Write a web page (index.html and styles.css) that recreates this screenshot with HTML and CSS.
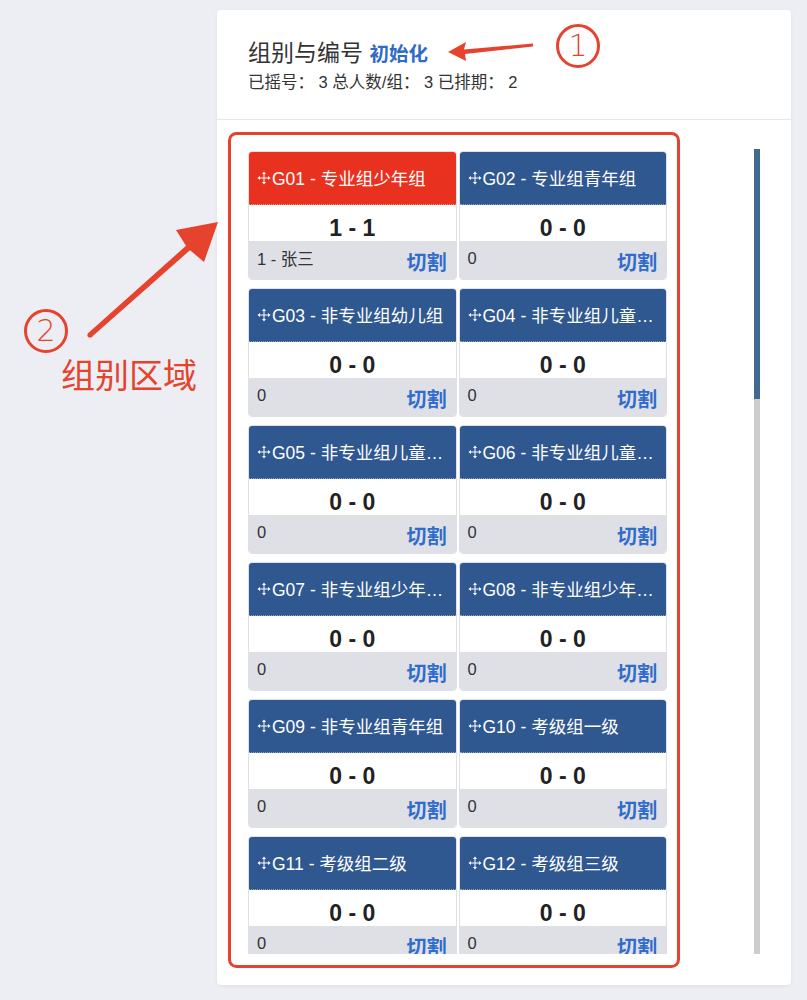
FILE: index.html
```html
<!DOCTYPE html>
<html lang="zh">
<head>
  <meta charset="UTF-8">
  <title>组别与编号</title>
  <link rel="stylesheet" href="styles.css">
</head>
<body>

<div class="page">
  <section class="panel">
    <header class="panel-head">
      <h2 class="panel-title">组别与编号 <a class="link-init">初始化</a></h2>
      <div class="panel-stats">已摇号： 3 总人数/组： 3 已排期： 2</div>
    </header>

    <div class="panel-body">
      <div class="group-list">
        <div class="group-grid">

          <div class="group-card">
            <div class="group-head active"><span class="move-icon"></span>G01 - 专业组少年组</div>
            <div class="group-score">1 - 1</div>
            <div class="group-foot"><span class="group-player">1 - 张三</span><a class="cut-link">切割</a></div>
          </div>
          <div class="group-card">
            <div class="group-head"><span class="move-icon"></span>G02 - 专业组青年组</div>
            <div class="group-score">0 - 0</div>
            <div class="group-foot"><span class="group-player">0</span><a class="cut-link">切割</a></div>
          </div>

          <div class="group-card">
            <div class="group-head"><span class="move-icon"></span>G03 - 非专业组幼儿组</div>
            <div class="group-score">0 - 0</div>
            <div class="group-foot"><span class="group-player">0</span><a class="cut-link">切割</a></div>
          </div>
          <div class="group-card">
            <div class="group-head"><span class="move-icon"></span>G04 - 非专业组儿童组一</div>
            <div class="group-score">0 - 0</div>
            <div class="group-foot"><span class="group-player">0</span><a class="cut-link">切割</a></div>
          </div>

          <div class="group-card">
            <div class="group-head"><span class="move-icon"></span>G05 - 非专业组儿童组二</div>
            <div class="group-score">0 - 0</div>
            <div class="group-foot"><span class="group-player">0</span><a class="cut-link">切割</a></div>
          </div>
          <div class="group-card">
            <div class="group-head"><span class="move-icon"></span>G06 - 非专业组儿童组三</div>
            <div class="group-score">0 - 0</div>
            <div class="group-foot"><span class="group-player">0</span><a class="cut-link">切割</a></div>
          </div>

          <div class="group-card">
            <div class="group-head"><span class="move-icon"></span>G07 - 非专业组少年组一</div>
            <div class="group-score">0 - 0</div>
            <div class="group-foot"><span class="group-player">0</span><a class="cut-link">切割</a></div>
          </div>
          <div class="group-card">
            <div class="group-head"><span class="move-icon"></span>G08 - 非专业组少年组二</div>
            <div class="group-score">0 - 0</div>
            <div class="group-foot"><span class="group-player">0</span><a class="cut-link">切割</a></div>
          </div>

          <div class="group-card">
            <div class="group-head"><span class="move-icon"></span>G09 - 非专业组青年组</div>
            <div class="group-score">0 - 0</div>
            <div class="group-foot"><span class="group-player">0</span><a class="cut-link">切割</a></div>
          </div>
          <div class="group-card">
            <div class="group-head"><span class="move-icon"></span>G10 - 考级组一级</div>
            <div class="group-score">0 - 0</div>
            <div class="group-foot"><span class="group-player">0</span><a class="cut-link">切割</a></div>
          </div>

          <div class="group-card">
            <div class="group-head"><span class="move-icon"></span>G11 - 考级组二级</div>
            <div class="group-score">0 - 0</div>
            <div class="group-foot"><span class="group-player">0</span><a class="cut-link">切割</a></div>
          </div>
          <div class="group-card">
            <div class="group-head"><span class="move-icon"></span>G12 - 考级组三级</div>
            <div class="group-score">0 - 0</div>
            <div class="group-foot"><span class="group-player">0</span><a class="cut-link">切割</a></div>
          </div>

        </div>
      </div>
      <div class="scrollbar"><div class="scrollbar-thumb"></div></div>
    </div>
  </section>
</div>

<!-- 标注 -->
<svg class="marks" width="807" height="1000" viewBox="0 0 807 1000">
  <rect x="229.5" y="133.5" width="449" height="833" rx="7" class="mark-line"/>
  <polygon class="mark-fill" points="448,52 466,42 464,49.5 533,43.5 533,46.5 465,54 466,61"/>
  <polygon class="mark-fill" points="218,222 176,230 186,245.8 88.3,333.1 91.7,336.9 190,250.2 204,262"/>
  <circle class="mark-fill" cx="90" cy="335" r="2.6"/>
</svg>
<div class="mark-num mark-num-1">1</div>
<div class="mark-num mark-num-2">2</div>
<div class="mark-label">组别区域</div>

</body>
</html>
```

FILE: styles.css
```css
html, body {
  margin: 0;
  padding: 0;
  background-color: #eceef3;
  font-family: "Helvetica Neue", "Liberation Sans", "Noto Sans CJK SC", sans-serif;
  color: #333;
}

.page {
  padding: 10px 16px 15px 217px;
}

.panel {
  width: 574px;
  height: 975px;
  background: #fff;
  border-radius: 4px;
  box-shadow: 0 1px 4px rgba(0,0,0,0.06);
  overflow: hidden;
}

.panel-head {
  height: 110px;
  box-sizing: border-box;
  padding: 28px 31px 0;
  border-bottom: 1px solid #e6e7ea;
}

.panel-title {
  margin: 0;
  font-size: 23px;
  font-weight: normal;
  line-height: 30px;
  color: #333;
}

.link-init {
  font-size: 19.5px;
  font-weight: bold;
  color: #2f6bc4;
  cursor: pointer;
}

.panel-stats {
  margin-top: 3px;
  font-size: 16.5px;
  line-height: 20px;
}

.panel-body {
  display: flex;
  align-items: flex-start;
  padding: 31px 0 0 31px;
}

.group-list {
  width: 419px;
  height: 803px;
  overflow: hidden;
}

.group-grid {
  display: grid;
  grid-template-columns: 1fr 1fr;
  column-gap: 2px;
  row-gap: 8px;
}

.group-card {
  border: 1px solid #dfe0e5;
  border-radius: 4px;
  overflow: hidden;
}

.group-head {
  height: 53px;
  box-sizing: border-box;
  padding: 0 8px;
  background: #2f5790;
  border-bottom: 1px dotted rgba(255,255,255,0.45);
  color: #fff;
  font-size: 17.5px;
  line-height: 55px;
  white-space: nowrap;
  overflow: hidden;
  text-overflow: ellipsis;
}

.group-head.active {
  background: #e8321f;
}

.move-icon {
  display: inline-block;
  width: 14px;
  height: 14px;
  margin-right: 1px;
  vertical-align: 0;
  background: url("data:image/svg+xml;utf8,<svg xmlns='http://www.w3.org/2000/svg' viewBox='0 0 14 14'><path d='M7 2v10M2 7h10' stroke='white' stroke-width='1'/><path d='M7 0.5L5 3h4zM7 13.5L5 11h4zM0.5 7L3 5v4zM13.5 7L11 5v4z' fill='white'/></svg>") no-repeat center;
}

.group-score {
  height: 36px;
  line-height: 46px;
  text-align: center;
  font-size: 23px;
  font-weight: bold;
  color: #222;
  background: #fff;
}

.group-foot {
  display: flex;
  justify-content: space-between;
  align-items: center;
  height: 38px;
  padding: 0 9px 0 8px;
  background: #dfe0e6;
}

.group-player {
  font-size: 16.5px;
  margin-top: -4px;
}

.cut-link {
  font-size: 20px;
  font-weight: bold;
  color: #2f6ccc;
  margin-top: 2px;
  cursor: pointer;
}

.scrollbar {
  width: 6px;
  height: 805px;
  margin: -2px 0 0 87px;
  background: #cdcdcd;
}

.scrollbar-thumb {
  height: 250px;
  background: #3f6a8e;
}

/* 标注层 */
.marks {
  position: absolute;
  top: 0;
  left: 0;
  pointer-events: none;
}

.mark-line {
  fill: none;
  stroke: #e5432d;
  stroke-width: 3;
}

.mark-fill {
  fill: #e5432d;
}

.mark-num {
  position: absolute;
  width: 38px;
  height: 38px;
  border: 3px solid #e5432d;
  border-radius: 50%;
  color: #e5432d;
  font-family: "DejaVu Sans", sans-serif;
  font-weight: 200;
  font-size: 30px;
  line-height: 38px;
  text-align: center;
}

.mark-num-1 {
  left: 556px;
  top: 24px;
}

.mark-num-2 {
  left: 24px;
  top: 309px;
}

.mark-label {
  position: absolute;
  left: 61px;
  top: 352px;
  font-family: "Noto Sans CJK SC", sans-serif;
  font-size: 34px;
  line-height: 44px;
  color: #e5432d;
}
```
